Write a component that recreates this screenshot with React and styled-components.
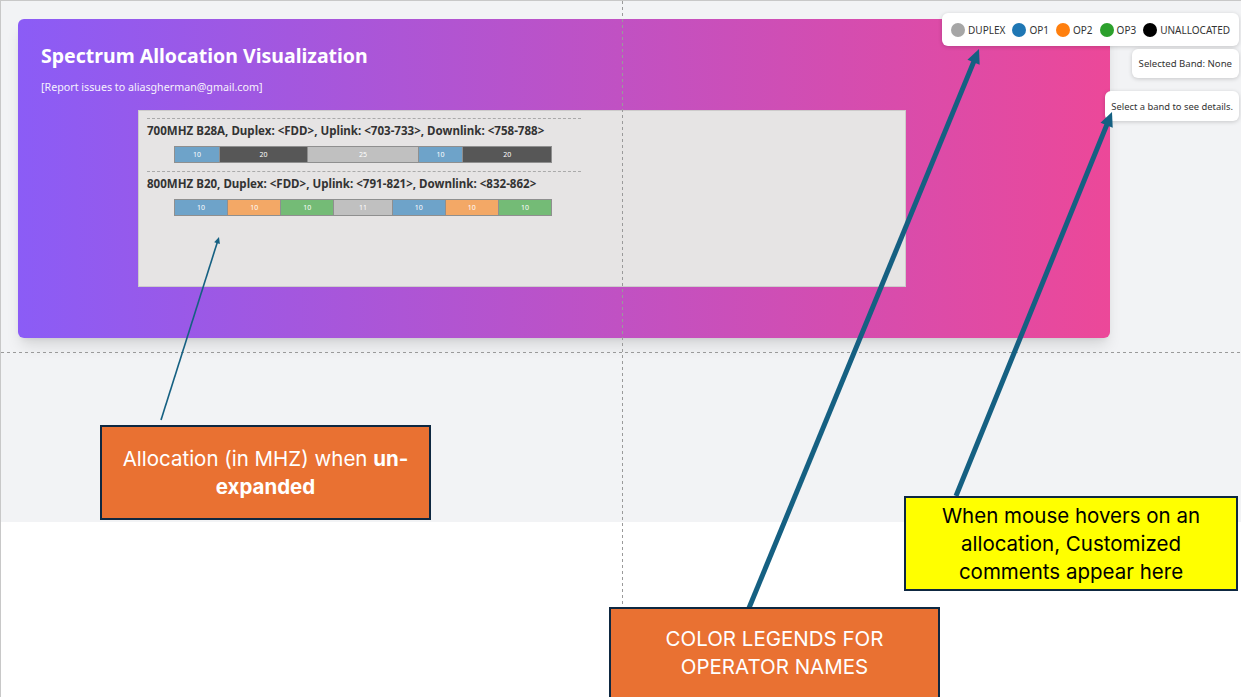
import React from "react";
import styled, { createGlobalStyle } from "styled-components";

const GlobalStyle = createGlobalStyle`
  html, body {
    margin: 0;
    padding: 0;
    background: #fff;
  }
  body {
    font-family: "Noto Sans", "Open Sans", sans-serif;
  }
`;

const Frame = styled.div`
  position: relative;
  width: 1241px;
  height: 697px;
  box-sizing: border-box;
  overflow: hidden;
  background: #fff;
  border-top: 1px solid #c8c8c8;
  border-left: 1px solid #c8c8c8;
`;

const AppArea = styled.div`
  height: 521px;
  box-sizing: border-box;
  background: #f2f3f5;
  padding: 18px 0 0 17px;
`;

const HeaderCard = styled.section`
  width: 1092px;
  height: 319px;
  box-sizing: border-box;
  border-radius: 6px;
  padding: 22px 23px;
  background: linear-gradient(to right, #8b5cf6, #ec4899);
  box-shadow: 0 10px 15px -3px rgba(0, 0, 0, 0.12),
    0 4px 6px -4px rgba(0, 0, 0, 0.1);
  color: #fff;
`;

const Title = styled.h1`
  margin: 0;
  font-size: 19.5px;
  line-height: 30px;
  font-weight: 700;
`;

const Subtitle = styled.p`
  margin: 8px 0 0;
  font-size: 10.7px;
  line-height: 16px;
  opacity: 0.92;
`;

const BandPanel = styled.div`
  width: 768px;
  height: 177px;
  box-sizing: border-box;
  margin: 15px 0 0 97px;
  padding: 7px 8px;
  background: #e6e4e4;
  border: 1px solid #cdcbcb;
  color: #333;
`;

const Separator = styled.div`
  width: 434px;
  border-top: 1px dashed #aaa;
  margin-bottom: 4px;
`;

const BandTitle = styled.div`
  font-size: 11.55px;
  line-height: 16px;
  font-weight: 700;
  color: #333;
  white-space: nowrap;
`;

const Bar = styled.div`
  display: flex;
  width: 378px;
  height: 17px;
  margin: 7px 0 8px 27px;
`;

const Segment = styled.div`
  flex: ${(p) => p.$units} 1 0;
  box-sizing: border-box;
  display: flex;
  align-items: center;
  justify-content: center;
  background: ${(p) => p.$color};
  border: 1px solid #8f8f8f;
  margin-left: -1px;
  &:first-child {
    margin-left: 0;
  }
  color: #fff;
  font-size: 7px;
`;

const SidePanel = styled.aside`
  position: absolute;
  top: 12px;
  right: 2px;
  display: flex;
  flex-direction: column;
  align-items: flex-end;
`;

const Card = styled.div`
  background: #fff;
  border-radius: 6px;
  box-shadow: 0 1px 4px rgba(0, 0, 0, 0.18);
  color: #333;
  font-size: ${(p) => p.$fs || 10}px;
  display: flex;
  align-items: center;
  height: ${(p) => p.$h}px;
  padding: 0 ${(p) => p.$px}px;
  margin-top: ${(p) => p.$mt || 0}px;
  box-sizing: border-box;
  white-space: nowrap;
`;

const LegendItem = styled.div`
  display: flex;
  align-items: center;
  gap: 3px;
  margin-right: 7px;
  &:last-child {
    margin-right: 0;
  }
`;

const Dot = styled.span`
  width: 14px;
  height: 14px;
  border-radius: 50%;
  background: ${(p) => p.$color};
`;

const Overlay = styled.svg`
  position: absolute;
  left: 0;
  top: 0;
  pointer-events: none;
`;

const Callout = styled.div`
  position: absolute;
  left: ${(p) => p.$x}px;
  top: ${(p) => p.$y}px;
  width: ${(p) => p.$w}px;
  height: ${(p) => p.$h}px;
  box-sizing: border-box;
  border: 2px solid #0e2841;
  background: ${(p) => (p.$yellow ? "#ffff00" : "#e97132")};
  color: ${(p) => (p.$yellow ? "#000" : "#fff")};
  font-family: "Inter", "Noto Sans", sans-serif;
  font-size: 20.5px;
  line-height: 28px;
  text-align: center;
  display: flex;
  align-items: ${(p) => (p.$top ? "flex-start" : "center")};
  justify-content: center;
  padding: ${(p) => (p.$top ? "16px 8px 0" : "0 8px")};
`;

const COLORS = {
  op1: "#6ea3c9",
  op2: "#f3a866",
  op3: "#74bb76",
  duplex: "#c0c0c0",
  free: "#575757",
};

const bands = [
  {
    title: "700MHZ B28A, Duplex: <FDD>, Uplink: <703-733>, Downlink: <758-788>",
    segments: [
      [10, "op1"],
      [20, "free"],
      [25, "duplex"],
      [10, "op1"],
      [20, "free"],
    ],
  },
  {
    title: "800MHZ B20, Duplex: <FDD>, Uplink: <791-821>, Downlink: <832-862>",
    segments: [
      [10, "op1"],
      [10, "op2"],
      [10, "op3"],
      [11, "duplex"],
      [10, "op1"],
      [10, "op2"],
      [10, "op3"],
    ],
  },
];

const legend = [
  ["DUPLEX", "#a6a6a6"],
  ["OP1", "#1f77b4"],
  ["OP2", "#ff7f0e"],
  ["OP3", "#2ca02c"],
  ["UNALLOCATED", "#000"],
];

const Arrow = ({ x1, y1, x2, y2, w, head }) => {
  const dx = x2 - x1;
  const dy = y2 - y1;
  const len = Math.hypot(dx, dy);
  const ux = dx / len;
  const uy = dy / len;
  const bx = x2 - ux * head * 1.3;
  const by = y2 - uy * head * 1.3;
  const px = -uy * head * 0.6;
  const py = ux * head * 0.6;
  return (
    <g fill="#156082" stroke="#156082">
      <line x1={x1} y1={y1} x2={bx + ux * 2} y2={by + uy * 2} strokeWidth={w} />
      <polygon
        stroke="none"
        points={`${x2},${y2} ${bx + px},${by + py} ${bx - px},${by - py}`}
      />
    </g>
  );
};

const App = () => {
  return (
    <Frame>
      <GlobalStyle />
      <AppArea>
        <HeaderCard>
          <Title>Spectrum Allocation Visualization</Title>
          <Subtitle>[Report issues to aliasgherman@gmail.com]</Subtitle>
          <BandPanel>
            {bands.map((band) => (
              <div key={band.title}>
                <Separator />
                <BandTitle>{band.title}</BandTitle>
                <Bar>
                  {band.segments.map(([units, kind], i) => (
                    <Segment key={i} $units={units} $color={COLORS[kind]}>
                      {units}
                    </Segment>
                  ))}
                </Bar>
              </div>
            ))}
          </BandPanel>
        </HeaderCard>
      </AppArea>

      <SidePanel>
        <Card $h={33} $px={9}>
          {legend.map(([name, color]) => (
            <LegendItem key={name}>
              <Dot $color={color} />
              {name}
            </LegendItem>
          ))}
        </Card>
        <Card $h={29} $px={7} $mt={3} $fs={9.6}>
          Selected Band: None
        </Card>
        <Card $h={30} $px={6} $mt={13} $fs={9.4}>
          Select a band to see details.
        </Card>
      </SidePanel>

      <Overlay width="1241" height="697">
        <line x1="621.5" y1="0" x2="621.5" y2="697" stroke="#9a9a9a" strokeDasharray="3 3" />
        <line x1="0" y1="351.5" x2="1241" y2="351.5" stroke="#9a9a9a" strokeDasharray="3 3" />
        <Arrow x1={160} y1={419} x2={218} y2={236} w={1.6} head={5} />
        <Arrow x1={748} y1={607} x2={978} y2={48} w={5} head={11} />
        <Arrow x1={955} y1={495} x2={1111} y2={111} w={5} head={11} />
      </Overlay>

      <Callout $x={99} $y={424} $w={331} $h={95}>
        <span>
          Allocation (in MHZ) when <b>un-</b>
          <br />
          <b>expanded</b>
        </span>
      </Callout>
      <Callout $x={903} $y={495} $w={334} $h={95} $yellow>
        <span>
          When mouse hovers on an
          <br />
          allocation, Customized
          <br />
          comments appear here
        </span>
      </Callout>
      <Callout $x={608} $y={606} $w={331} $h={100} $top>
        <span>
          COLOR LEGENDS FOR
          <br />
          OPERATOR NAMES
        </span>
      </Callout>
    </Frame>
  );
};

export default App;
